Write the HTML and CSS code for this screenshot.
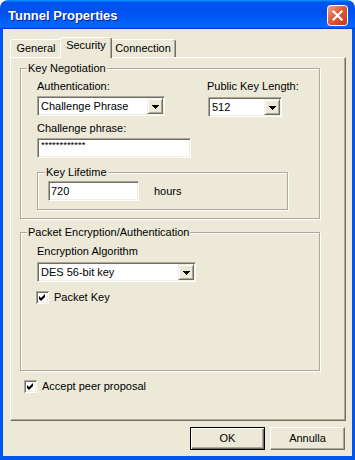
FILE: index.html
```html
<!DOCTYPE html>
<html>
<head>
<meta charset="utf-8">
<link rel="stylesheet" href="styles.css">
</head>
<body>
<div class="window">
  <div class="titlebar">
    <span class="title">Tunnel Properties</span>
    <div class="close">
      <svg width="21" height="21" viewBox="0 0 21 21">
        <defs>
          <linearGradient id="cg" x1="0" y1="0" x2="1" y2="1">
            <stop offset="0" stop-color="#F5A88F"/>
            <stop offset="0.45" stop-color="#E25A35"/>
            <stop offset="1" stop-color="#C0391A"/>
          </linearGradient>
        </defs>
        <rect x="0.5" y="0.5" width="20" height="20" rx="3" fill="url(#cg)" stroke="#FFFFFF"/>
        <path d="M6.5 6.5L14.5 14.5M14.5 6.5L6.5 14.5" stroke="#FFFFFF" stroke-width="2.2" stroke-linecap="square"/>
      </svg>
    </div>
  </div>
  <div class="frame">
    <div class="tabs">
      <div class="tab t-general">General</div>
      <div class="tab t-security active">Security</div>
      <div class="tab t-connection">Connection</div>
    </div>
    <div class="panel">
      <fieldset class="group g-key">
        <legend>Key Negotiation</legend>
        <div class="body">
          <div class="kn-row">
            <div class="col col-auth">
              <div class="label">Authentication:</div>
              <div class="combo w-auth">
                <span class="combo-text">Challenge Phrase</span>
                <span class="combo-btn"><svg width="7" height="4" viewBox="0 0 7 4"><path d="M0 0h7v1h-1v1h-1v1h-1v1h-1v-1h-1v-1h-1v-1h-1z" fill="#000"/></svg></span>
              </div>
            </div>
            <div class="col col-pk">
              <div class="label">Public Key Length:</div>
              <div class="combo w-pk">
                <span class="combo-text">512</span>
                <span class="combo-btn"><svg width="7" height="4" viewBox="0 0 7 4"><path d="M0 0h7v1h-1v1h-1v1h-1v1h-1v-1h-1v-1h-1v-1h-1z" fill="#000"/></svg></span>
              </div>
            </div>
          </div>
          <div class="label l-phrase">Challenge phrase:</div>
          <div class="input w-phrase"><span class="pw">************</span></div>
          <fieldset class="group g-life">
            <legend>Key Lifetime</legend>
            <div class="life-row">
              <div class="input w-life"><span class="input-text">720</span></div>
              <span class="hours">hours</span>
            </div>
          </fieldset>
        </div>
      </fieldset>

      <fieldset class="group g-enc">
        <legend>Packet Encryption/Authentication</legend>
        <div class="body">
          <div class="label">Encryption Algorithm</div>
          <div class="combo w-enc">
            <span class="combo-text">DES 56-bit key</span>
            <span class="combo-btn"><svg width="7" height="4" viewBox="0 0 7 4"><path d="M0 0h7v1h-1v1h-1v1h-1v1h-1v-1h-1v-1h-1v-1h-1z" fill="#000"/></svg></span>
          </div>
          <div class="check-row cr-packet">
            <svg class="checkbox" width="13" height="13" viewBox="0 0 13 13">
              <rect width="13" height="13" fill="#FFFFFF"/>
              <path d="M0 0H13V1H1V13H0Z" fill="#ACA899"/>
              <path d="M1 1H12V2H2V12H1Z" fill="#716F64"/>
              <path d="M11 2H12V12H2V11H11Z" fill="#F1EFE2"/>
              <path d="M3 5L5 7L9 3V6L5 10L3 8Z" fill="#000"/>
            </svg>
            <span class="check-label">Packet Key</span>
          </div>
        </div>
      </fieldset>

      <div class="check-row cr-accept">
        <svg class="checkbox" width="13" height="13" viewBox="0 0 13 13">
          <rect width="13" height="13" fill="#FFFFFF"/>
          <path d="M0 0H13V1H1V13H0Z" fill="#ACA899"/>
          <path d="M1 1H12V2H2V12H1Z" fill="#716F64"/>
          <path d="M11 2H12V12H2V11H11Z" fill="#F1EFE2"/>
          <path d="M3 5L5 7L9 3V6L5 10L3 8Z" fill="#000"/>
        </svg>
        <span class="check-label">Accept peer proposal</span>
      </div>
    </div>
    <div class="buttons">
      <div class="btn default">OK</div>
      <div class="btn">Annulla</div>
    </div>
  </div>
</div>
</body>
</html>
```

FILE: styles.css
```css
html, body {
  margin: 0;
  padding: 0;
  background: #FFFFFF;
}

body {
  font-family: "Liberation Sans", Arial, sans-serif;
  font-size: 11px;
  line-height: 13px;
  color: #000;
}

.window {
  width: 355px;
  height: 460px;
  display: flex;
  flex-direction: column;
}

.titlebar {
  flex: none;
  height: 29px;
  box-sizing: border-box;
  padding: 2px 7px 0 8px;
  display: flex;
  align-items: center;
  justify-content: space-between;
  border-radius: 8px 8px 0 0;
  background: linear-gradient(180deg, #0997ff, #0053ee 8%, #0050ee 40%, #0066ff 88%, #0066ff 93%, #005bff 95%, #003dd7 96%, #003dd7);
}

.title {
  color: #FFFFFF;
  font-weight: bold;
  font-size: 13px;
  line-height: 15px;
  text-shadow: 1px 1px 0 #0A1D8C;
}

.close {
  width: 21px;
  height: 21px;
  display: flex;
}

.frame {
  flex: 1;
  background: #ECE9D8;
  border-style: solid;
  border-color: #0055EA;
  border-width: 0 3px 4px 3px;
  display: flex;
  flex-direction: column;
}

/* tabs */
.tabs {
  height: 28px;
  box-sizing: border-box;
  padding-left: 7px;
  display: flex;
  align-items: flex-end;
}

.tab {
  box-sizing: border-box;
  height: 18px;
  padding-top: 2px;
  text-align: center;
  background: #ECE9D8;
  border-top: 1px solid #FFFFFF;
  border-left: 1px solid #FFFFFF;
  border-right: 1px solid #716F64;
  box-shadow: inset -1px 0 0 #ACA899;
  border-radius: 3px 3px 0 0;
}

.t-general { width: 52px; }
.t-security { width: 52px; }
.t-connection { width: 66px; }

.tab.active {
  height: 21px;
  padding-top: 1px;
  margin: 0 -2px -1px -2px;
  position: relative;
  z-index: 1;
}

/* panel */
.panel {
  margin-left: 7px;
  width: 336px;
  height: 364px;
  box-sizing: border-box;
  border: 1px solid;
  border-color: #FFFFFF #716F64 #716F64 #FFFFFF;
  box-shadow: inset -1px -1px 0 #ACA899;
  padding: 4px 0 0 9px;
}

.group {
  margin: 0;
  min-width: 0;
  box-sizing: border-box;
  border: 1px solid #ACA899;
  box-shadow: inset 1px 1px 0 #FFFFFF, 1px 1px 0 #FFFFFF;
  padding: 0 0 0 6px;
}

.group legend {
  padding: 0 1px;
  margin: 0;
  line-height: 13px;
  background: #ECE9D8;
}

.g-key {
  width: 300px;
  padding-top: 5px;
  padding-bottom: 8px;
}

.body {
  padding-left: 10px;
}

.kn-row {
  display: flex;
}

.col-auth {
  width: 170px;
}

.label {
  line-height: 13px;
  white-space: nowrap;
}

.combo {
  box-sizing: border-box;
  height: 20px;
  margin-top: 3px;
  border: 1px solid;
  border-color: #ACA899 #FFFFFF #FFFFFF #ACA899;
  box-shadow: inset 1px 1px 0 #716F64, inset -1px -1px 0 #F1EFE2;
  background: #FFFFFF;
  padding: 1px;
  display: flex;
}

.combo-text {
  flex: 1;
  line-height: 16px;
  padding-left: 2px;
  white-space: nowrap;
}

.combo-btn {
  box-sizing: border-box;
  width: 16px;
  height: 16px;
  border: 1px solid;
  border-color: #F1EFE2 #716F64 #716F64 #F1EFE2;
  box-shadow: inset 1px 1px 0 #FFFFFF, inset -1px -1px 0 #ACA899;
  background: #ECE9D8;
  display: flex;
  align-items: center;
  justify-content: center;
}

.combo-btn svg {
  display: block;
  margin-top: 1px;
}

.w-auth { width: 128px; }
.w-pk { width: 74px; margin-left: 1px; margin-top: 4px; }
.w-enc { width: 159px; margin-top: 4px; }

.l-phrase {
  margin-top: 5px;
}

.input {
  box-sizing: border-box;
  height: 20px;
  margin-top: 3px;
  border: 1px solid;
  border-color: #ACA899 #FFFFFF #FFFFFF #ACA899;
  box-shadow: inset 1px 1px 0 #716F64, inset -1px -1px 0 #F1EFE2;
  background: #FFFFFF;
  padding: 1px 2px;
}

.w-phrase { width: 154px; }

.pw {
  display: block;
  font-size: 9.5px;
  line-height: 10px;
  padding-left: 1px;
}

.input-text {
  display: block;
  line-height: 16px;
}

.g-life {
  margin-top: 8px;
  width: 251px;
  padding: 2px 0 8px 7px;
}

.life-row {
  display: flex;
  align-items: center;
}

.w-life {
  width: 91px;
  margin: 0 0 0 3px;
}

.hours {
  margin-left: 15px;
}

.g-enc {
  width: 300px;
  margin-top: 7px;
  padding-top: 6px;
  padding-bottom: 66px;
}

.check-row {
  display: flex;
  align-items: center;
  height: 13px;
}

.checkbox {
  display: block;
  flex: none;
}

.check-label {
  margin-left: 5px;
  white-space: nowrap;
}

.cr-packet {
  margin-top: 9px;
  margin-left: -1px;
}

.cr-accept {
  margin-top: 9px;
  margin-left: 4px;
}

/* buttons */
.buttons {
  display: flex;
  justify-content: flex-end;
  gap: 5px;
  margin-top: 6px;
  padding-right: 7px;
}

.btn {
  box-sizing: border-box;
  width: 75px;
  height: 23px;
  border: 1px solid;
  border-color: #FFFFFF #716F64 #716F64 #FFFFFF;
  box-shadow: inset -1px -1px 0 #ACA899;
  display: flex;
  align-items: center;
  justify-content: center;
  line-height: 13px;
}

.btn.default {
  border-color: #000000;
  box-shadow: inset 1px 1px 0 #FFFFFF, inset -1px -1px 0 #716F64, inset -2px -2px 0 #ACA899;
}
```
